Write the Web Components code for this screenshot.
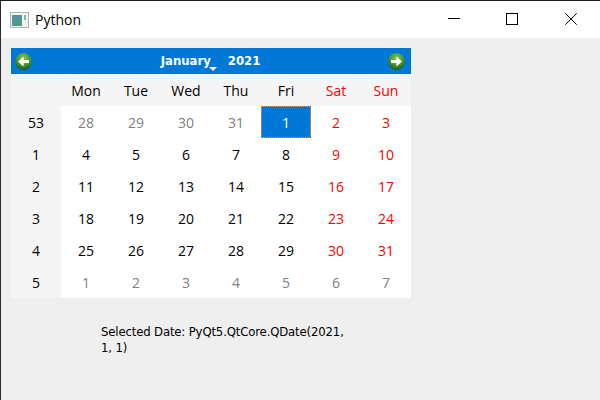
<!DOCTYPE html>
<html>
<head>
<meta charset="utf-8">
<title>Python</title>
<style>
  html, body { margin: 0; padding: 0; }
  body { width: 600px; height: 400px; overflow: hidden; font-family: "Open Sans", "Noto Sans", sans-serif; }
</style>
</head>
<body>
<qt-window title="Python">
  <qt-calendar year="2021" month="January"></qt-calendar>
  <qt-label>Selected Date: PyQt5.QtCore.QDate(2021, 1, 1)</qt-label>
</qt-window>
<script>
class QtWindow extends HTMLElement {
    constructor() {
        super();
        const shadowRoot = this.attachShadow({mode: 'open'});
        shadowRoot.innerHTML = `
        <style>
            :host { display: flex; flex-direction: column; box-sizing: border-box; width: 600px; height: 400px;
                background: #efefef; border-top: 1px solid #1c1c1c; border-left: 1px solid #2a2a2a; }
            .bar { display: flex; align-items: center; height: 37px; background: #fff; flex: none; }
            .app { margin-left: 9px; width: 19px; height: 16px; flex: none; }
            .title { margin-left: 6px; font-size: 14px; color: #000; flex: 1; }
            .btn { width: 46px; height: 30px; display: flex; align-items: center; justify-content: center; flex: none; margin-top: -1px; }
            .btn + .btn { margin-left: 12px; }
            .btn:last-child { margin-left: 13px; }
            .btns { display: flex; margin-right: 6px; }
            .body { flex: 1; padding: 10px 0 0 10px; }
        </style>
        <div class="bar">
            <svg class="app" viewBox="0 0 19 16">
                <defs><linearGradient id="a" x1="0" y1="0" x2="1" y2="1">
                    <stop offset="0" stop-color="#5f8fb0"/><stop offset="1" stop-color="#45a070"/>
                </linearGradient></defs>
                <rect x="0.5" y="0.5" width="18" height="15" fill="#f2f4f2" stroke="#b0b3b5"/>
                <rect x="2" y="3" width="10" height="11" fill="url(#a)"/>
                <rect x="14" y="3" width="2" height="5" fill="#7fb7a8"/>
            </svg>
            <span class="title"></span>
            <div class="btns">
                <div class="btn"><svg width="12" height="12" viewBox="0 0 12 12"><path d="M0 5.5H12" stroke="#000" fill="none"/></svg></div>
                <div class="btn"><svg width="12" height="12" viewBox="0 0 12 12"><rect x="0.5" y="0.5" width="11" height="11" stroke="#000" fill="none"/></svg></div>
                <div class="btn"><svg width="12" height="12" viewBox="0 0 12 12"><path d="M0.3 0.3L11.7 11.7M11.7 0.3L0.3 11.7" stroke="#000" fill="none"/></svg></div>
            </div>
        </div>
        <div class="body"><slot></slot></div>
        `;
        shadowRoot.querySelector('.title').textContent = this.getAttribute('title');
    }
}
customElements.define('qt-window', QtWindow);

class QtNavButton extends HTMLElement {
    constructor() {
        super();
        const shadowRoot = this.attachShadow({mode: 'open'});
        const arrow = this.getAttribute('dir') === 'prev'
            ? 'M14 6.9H8.6V3.4L3 8.5L8.6 13.6V10.1H14z'
            : 'M3 6.9H8.4V3.4L14 8.5L8.4 13.6V10.1H3z';
        shadowRoot.innerHTML = `
        <style>
            :host { display: block; width: 17px; height: 17px; }
            svg { display: block; }
        </style>
        <svg width="17" height="17" viewBox="0 0 17 17">
            <defs><radialGradient id="g" cx="50%" cy="30%" r="70%">
                <stop offset="0" stop-color="#86c653"/><stop offset="0.65" stop-color="#3f8f2b"/><stop offset="1" stop-color="#1c5a1b"/>
            </radialGradient></defs>
            <circle cx="8.5" cy="8.5" r="8.4" fill="url(#g)"/>
            <path d="${arrow}" fill="#fff"/>
        </svg>
        `;
    }
}
customElements.define('qt-nav-button', QtNavButton);

class QtCalendar extends HTMLElement {
    constructor() {
        super();
        const shadowRoot = this.attachShadow({mode: 'open'});
        const heads = ['Mon', 'Tue', 'Wed', 'Thu', 'Fri', 'Sat', 'Sun'];
        const rows = [
            [53, 28, 29, 30, 31, 1, 2, 3],
            [1, 4, 5, 6, 7, 8, 9, 10],
            [2, 11, 12, 13, 14, 15, 16, 17],
            [3, 18, 19, 20, 21, 22, 23, 24],
            [4, 25, 26, 27, 28, 29, 30, 31],
            [5, 1, 2, 3, 4, 5, 6, 7]
        ];
        let cells = '<div class="c head"></div>';
        heads.forEach((h, i) => {
            cells += `<div class="c head${i > 4 ? ' red' : ''}">${h}</div>`;
        });
        rows.forEach((row, r) => {
            row.forEach((v, i) => {
                let cls = 'c';
                if (i === 0) cls += ' week';
                else {
                    const other = (r === 0 && i < 5) || r === 5;
                    if (other) cls += ' other';
                    else if (i > 5) cls += ' red';
                    if (r === 0 && i === 5) cls += ' sel';
                }
                cells += `<div class="${cls}">${v}</div>`;
            });
        });
        shadowRoot.innerHTML = `
        <style>
            :host { display: block; width: 400px; font-size: 14px; color: #000; }
            .nav { display: flex; align-items: center; height: 26px; background: #0078d7; padding: 0 6px 0 4px; box-sizing: border-box; }
            .mid { flex: 1; display: flex; justify-content: center; color: #fff; font: bold 11.7px Tahoma, "DejaVu Sans", sans-serif; padding-left: 1px; }
            .month { position: relative; margin-right: 17px; }
            .month::after { content: ""; position: absolute; right: -6px; bottom: -3px; border: 4px solid transparent; border-top: 4px solid #fff; border-bottom: 0; }
            .grid { display: grid; grid-template-columns: repeat(8, 50px); grid-auto-rows: 32px; background: #fff; }
            .c { display: flex; align-items: center; justify-content: center; box-sizing: border-box; }
            .head, .week { background: #f5f5f5; }
            .red { color: #f00; }
            .other { color: #808080; }
            .sel { color: #fff; background:
                repeating-linear-gradient(90deg, #ff8c1a 0 1px, #3a78a8 1px 2px) left top / 100% 1px no-repeat,
                repeating-linear-gradient(90deg, #ff8c1a 0 1px, #3a78a8 1px 2px) left bottom / 100% 1px no-repeat,
                repeating-linear-gradient(0deg, #ff8c1a 0 1px, #3a78a8 1px 2px) left top / 1px 100% no-repeat,
                repeating-linear-gradient(0deg, #ff8c1a 0 1px, #3a78a8 1px 2px) right top / 1px 100% no-repeat,
                #0078d7; }
        </style>
        <div class="nav">
            <qt-nav-button dir="prev"></qt-nav-button>
            <div class="mid"><span class="month"></span><span class="year"></span></div>
            <qt-nav-button dir="next"></qt-nav-button>
        </div>
        <div class="grid">${cells}</div>
        `;
        shadowRoot.querySelector('.month').textContent = this.getAttribute('month');
        shadowRoot.querySelector('.year').textContent = this.getAttribute('year');
    }
}
customElements.define('qt-calendar', QtCalendar);

class QtLabel extends HTMLElement {
    constructor() {
        super();
        const shadowRoot = this.attachShadow({mode: 'open'});
        shadowRoot.innerHTML = `
        <style>
            :host { display: block; width: 250px; margin: 26px 0 0 90px; font: 11.7px/16px Tahoma, "DejaVu Sans", sans-serif; letter-spacing: -0.15px; color: #000; }
        </style>
        <slot></slot>
        `;
    }
}
customElements.define('qt-label', QtLabel);
</script>
</body>
</html>
